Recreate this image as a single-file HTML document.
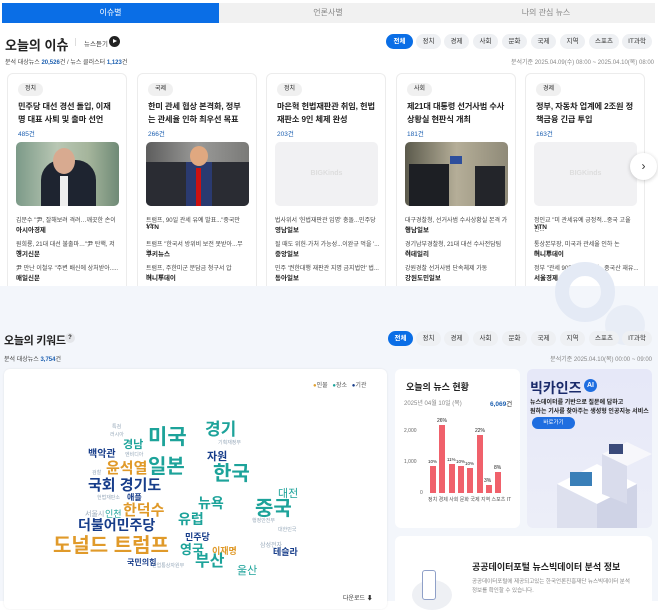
<!DOCTYPE html>
<html><head><meta charset="utf-8"><style>
*{margin:0;padding:0;box-sizing:border-box}
body{width:658px;height:601px;overflow:hidden;background:#fff;font-family:"Liberation Sans","Noto Sans CJK KR",sans-serif;color:#222;position:relative}
.a{position:absolute;white-space:nowrap}
.tab{position:absolute;top:3px;height:20px;font-size:8px;line-height:20px;text-align:center;color:#888;background:#f1f1f1}
.pill{position:absolute;height:15px;line-height:15px;font-size:6.5px;text-align:center;border-radius:8px;background:#eef0f3;color:#333}
.pill.on{background:#0a6ee6;color:#fff;font-weight:bold}
.card{position:absolute;top:73px;width:120px;height:230px;background:#fff;border:1px solid #ececec;border-radius:6px}
.tag{position:absolute;left:10px;top:9px;height:13px;line-height:13px;padding:0 7px;font-size:6px;background:#f0f0f0;border-radius:7px}
.tt{position:absolute;left:10px;top:26px;width:99px;font-size:8.2px;line-height:13px;font-weight:bold;white-space:normal;letter-spacing:-.1px}
.cnt{position:absolute;left:10px;top:54px;font-size:6.5px;color:#1c5fb0}
.img{position:absolute;left:8px;top:68px;width:103px;height:64px;border-radius:5px;overflow:hidden}
.ph{background:#f1f1f3;color:#ddd;font-size:7px;font-weight:bold;text-align:center;line-height:64px}
.li{position:absolute;left:8px;font-size:6px;color:#444;width:106px;overflow:hidden}
.src{position:absolute;left:8px;font-size:6.5px;font-weight:bold;color:#222}
.w{position:absolute;white-space:nowrap;font-weight:bold;line-height:1}
.t{color:#1da39a}.n{color:#173d8a}.o{color:#e09a2a}.g{color:#9ab;font-weight:normal}
</style></head><body>
<div class="tab" style="left:2px;width:217px;background:#0a6ee6;color:#fff">이슈별</div>
<div class="tab" style="left:219px;width:218px">언론사별</div>
<div class="tab" style="left:437px;width:218px">나의 관심 뉴스</div>

<div class="a" style="left:5px;top:35px;font-size:13px;font-weight:bold">오늘의 이슈</div>
<div class="a" style="left:60px;top:38px;font-size:7px;font-weight:bold">?</div>
<div class="a" style="left:75px;top:38px;width:1px;height:8px;background:#ddd"></div>
<div class="a" style="left:84px;top:38px;font-size:6.5px;color:#444">뉴스듣기</div>
<div class="a" style="left:109px;top:36px;width:11px;height:11px;border-radius:50%;background:#222"></div>
<div class="a" style="left:113px;top:39px;border-left:4px solid #fff;border-top:2.5px solid transparent;border-bottom:2.5px solid transparent"></div>

<div class="pill on" style="left:386px;top:34px;width:27px">전체</div>
<div class="pill" style="left:416px;top:34px;width:25px">정치</div>
<div class="pill" style="left:444px;top:34px;width:25px">경제</div>
<div class="pill" style="left:473px;top:34px;width:25px">사회</div>
<div class="pill" style="left:502px;top:34px;width:25px">문화</div>
<div class="pill" style="left:531px;top:34px;width:25px">국제</div>
<div class="pill" style="left:560px;top:34px;width:25px">지역</div>
<div class="pill" style="left:589px;top:34px;width:30px">스포츠</div>
<div class="pill" style="left:622px;top:34px;width:30px">IT과학</div>

<div class="a" style="left:5px;top:57px;font-size:6px;color:#444">분석 대상뉴스 <b style="color:#1c5fb0">20,526</b>건 / 뉴스 클러스터 <b style="color:#1c5fb0">1,123</b>건</div>
<div class="a" style="right:4px;top:57px;font-size:6px;color:#888">분석기준 2025.04.09(수) 08:00 ~ 2025.04.10(목) 08:00</div>

<div class="card" style="left:7px"><div class="tag">정치</div><div class="tt">민주당 대선 경선 돌입, 이재명 대표 사퇴 및 출마 선언</div><div class="cnt">485건</div>
<div class="img" style="background:linear-gradient(90deg,#7c9a88,#b9c7b4 40%,#a5b59c 70%,#6f8a76)"><div style="position:absolute;left:25px;top:18px;width:55px;height:50px;border-radius:20px 20px 0 0;background:#1e2430"></div><div style="position:absolute;left:37px;top:6px;width:22px;height:26px;border-radius:50%;background:#d8aa90"></div><div style="position:absolute;left:44px;top:34px;width:8px;height:30px;background:#eee"></div></div>
<div class="li" style="top:141px">김문수 "尹, 잘해보려 격려…깨끗한 손이 ...</div><div class="src" style="top:150px">아시아경제</div>
<div class="li" style="top:165px">원희룡, 21대 대선 불출마…"尹 탄핵, 저에...</div><div class="src" style="top:174px">경기신문</div>
<div class="li" style="top:189px">尹 만난 이철우 "주변 배신에 상처받아.....</div><div class="src" style="top:198px">매일신문</div>
<div class="li" style="top:213px">권력의 대선 출마 선언 ...</div></div>

<div class="card" style="left:137px"><div class="tag">국제</div><div class="tt">한미 관세 협상 본격화, 정부는 관세율 인하 최우선 목표</div><div class="cnt">266건</div>
<div class="img" style="background:linear-gradient(90deg,#5d5d5d,#9a9a98 50%,#7a7a78)"><div style="position:absolute;left:0;top:20px;width:103px;height:44px;background:#2a2c33"></div><div style="position:absolute;left:40px;top:20px;width:26px;height:44px;background:#2a3a70"></div><div style="position:absolute;left:50px;top:26px;width:5px;height:38px;background:#c11"></div><div style="position:absolute;left:44px;top:4px;width:18px;height:20px;border-radius:50%;background:#e0a880"></div></div>
<div class="li" style="top:141px">트럼프, 90일 관세 유예 발표..."중국만 12...</div><div class="src" style="top:150px">YTN</div>
<div class="li" style="top:165px">트럼프 "한국서 방위비 보전 못받아...무역...</div><div class="src" style="top:174px">쿠키뉴스</div>
<div class="li" style="top:189px">트럼프, 주한미군 분담금 청구서 압박..."무...</div><div class="src" style="top:198px">머니투데이</div></div>

<div class="card" style="left:266px"><div class="tag">정치</div><div class="tt">마은혁 헌법재판관 취임, 헌법재판소 9인 체제 완성</div><div class="cnt">203건</div>
<div class="img ph">BIGKinds</div>
<div class="li" style="top:141px">법사위서 '헌법재판관 임명' 충돌...민주당 ...</div><div class="src" style="top:150px">영남일보</div>
<div class="li" style="top:165px">될 때도 위헌·가처 가능성...이완규 먹을 '...</div><div class="src" style="top:174px">중앙일보</div>
<div class="li" style="top:189px">민주 '권한대행 재판관 지명 금지법안' 법...</div><div class="src" style="top:198px">동아일보</div></div>

<div class="card" style="left:396px"><div class="tag">사회</div><div class="tt">제21대 대통령 선거사범 수사상황실 현판식 개최</div><div class="cnt">181건</div>
<div class="img" style="background:linear-gradient(90deg,#5b5a4c,#b5ae98 50%,#8f8a78)"><div style="position:absolute;left:4px;top:22px;width:40px;height:42px;background:#1d1f24"></div><div style="position:absolute;left:70px;top:24px;width:30px;height:40px;background:#23252a"></div><div style="position:absolute;left:45px;top:14px;width:12px;height:8px;background:#2d4e9c"></div></div>
<div class="li" style="top:141px">대구경찰청, 선거사범 수사상황실 본격 가동</div><div class="src" style="top:150px">영남일보</div>
<div class="li" style="top:165px">경기남부경찰청, 21대 대선 수사전담팀 가...</div><div class="src" style="top:174px">이데일리</div>
<div class="li" style="top:189px">강원경찰 선거사범 단속체제 가동</div><div class="src" style="top:198px">강원도민일보</div></div>

<div class="card" style="left:525px"><div class="tag">경제</div><div class="tt">정부, 자동차 업계에 2조원 정책금융 긴급 투입</div><div class="cnt">163건</div>
<div class="img ph">BIGKinds</div>
<div class="li" style="top:141px">정인교 "미 관세유예 긍정적...중국 고율관...</div><div class="src" style="top:150px">YTN</div>
<div class="li" style="top:165px">통상본부장, 미국과 관세율 인하 논의..."동...</div><div class="src" style="top:174px">머니투데이</div>
<div class="li" style="top:189px">정부 "관세 90일 유예 긍정...중국산 재유...</div><div class="src" style="top:198px">서울경제</div></div>

<div class="a" style="left:630px;top:153px;width:27px;height:27px;border-radius:50%;background:#fff;box-shadow:0 1px 4px rgba(0,0,0,.2);font-size:12px;line-height:27px;text-align:center;color:#333">›</div>

<div class="a" style="left:0;top:286px;width:658px;height:315px;background:#f3f6fb"></div>
<div class="a" style="left:555px;top:262px;width:60px;height:60px;border-radius:50%;border:14px solid #e4eaf5"></div>
<div class="a" style="left:605px;top:305px;width:40px;height:40px;border-radius:50%;background:#e8edf6"></div>

<div class="a" style="left:4px;top:332px;font-size:11px;font-weight:bold;letter-spacing:-.3px">오늘의 키워드</div>
<div class="a" style="left:65px;top:333px;width:10px;height:10px;border-radius:50%;background:#e4e6ea;font-size:6px;line-height:10px;text-align:center;font-weight:bold">?</div>
<div class="pill on" style="left:388px;top:331px;width:25px">전체</div>
<div class="pill" style="left:416px;top:331px;width:25px">정치</div>
<div class="pill" style="left:444px;top:331px;width:25px">경제</div>
<div class="pill" style="left:473px;top:331px;width:25px">사회</div>
<div class="pill" style="left:502px;top:331px;width:25px">문화</div>
<div class="pill" style="left:531px;top:331px;width:25px">국제</div>
<div class="pill" style="left:560px;top:331px;width:25px">지역</div>
<div class="pill" style="left:589px;top:331px;width:30px">스포츠</div>
<div class="pill" style="left:622px;top:331px;width:30px">IT과학</div>
<div class="a" style="left:4px;top:354px;font-size:6px;color:#444">분석 대상뉴스 <b style="color:#1c5fb0">3,754</b>건</div>
<div class="a" style="right:6px;top:354px;font-size:6px;color:#888">분석기준 2025.04.10(목) 00:00 ~ 09:00</div>

<div class="a" style="left:4px;top:369px;width:383px;height:240px;background:#fff;border-radius:6px;box-shadow:0 0 2px rgba(0,0,0,.08)"></div>
<div class="a" style="left:313px;top:380px;font-size:6px;color:#555;word-spacing:3px"><span style="color:#e0a030">●</span>인물 <span style="color:#1da39a">●</span>장소 <span style="color:#173d8a">●</span>기관</div>

<div class="w t" style="left:148px;top:427px;font-size:21px">미국</div>
<div class="w t" style="left:205px;top:421px;font-size:17px">경기</div>
<div class="w t" style="left:123px;top:440px;font-size:11px">경남</div>
<div class="w n" style="left:88px;top:450px;font-size:10px">백악관</div>
<div class="w o" style="left:106px;top:461px;font-size:15px">윤석열</div>
<div class="w t" style="left:148px;top:457px;font-size:20px">일본</div>
<div class="w n" style="left:207px;top:452px;font-size:11px">자원</div>
<div class="w t" style="left:213px;top:464px;font-size:20px">한국</div>
<div class="w n" style="left:88px;top:478px;font-size:15px">국회 경기도</div>
<div class="w t" style="left:198px;top:496px;font-size:14px">뉴욕</div>
<div class="w t" style="left:278px;top:489px;font-size:11px;font-weight:normal">대전</div>
<div class="w t" style="left:255px;top:499px;font-size:20px">중국</div>
<div class="w n" style="left:127px;top:494px;font-size:8px">애플</div>
<div class="w o" style="left:123px;top:503px;font-size:15px">한덕수</div>
<div class="w g" style="left:85px;top:511px;font-size:7px">서울시</div>
<div class="w t" style="left:105px;top:510px;font-size:9px;font-weight:normal">인천</div>
<div class="w t" style="left:178px;top:512px;font-size:14px">유럽</div>
<div class="w n" style="left:78px;top:518px;font-size:14px">더불어민주당</div>
<div class="w o" style="left:53px;top:536px;font-size:20px">도널드 트럼프</div>
<div class="w n" style="left:185px;top:533px;font-size:9px">민주당</div>
<div class="w t" style="left:180px;top:543px;font-size:13px">영국</div>
<div class="w o" style="left:212px;top:547px;font-size:9px">이재명</div>
<div class="w t" style="left:195px;top:554px;font-size:16px">부산</div>
<div class="w n" style="left:273px;top:548px;font-size:9px">테슬라</div>
<div class="w g" style="left:260px;top:543px;font-size:6px">삼성전자</div>
<div class="w n" style="left:127px;top:559px;font-size:8px">국민의힘</div>
<div class="w t" style="left:237px;top:566px;font-size:11px;font-weight:normal">울산</div>
<div class="w g" style="left:112px;top:425px;font-size:5px">특검</div>
<div class="w g" style="left:110px;top:433px;font-size:5px">러시아</div>
<div class="w g" style="left:125px;top:453px;font-size:5px">엔비디아</div>
<div class="w g" style="left:92px;top:471px;font-size:5px">검찰</div>
<div class="w g" style="left:97px;top:496px;font-size:5px">헌법재판소</div>
<div class="w g" style="left:278px;top:528px;font-size:5px">대한민국</div>
<div class="w g" style="left:252px;top:519px;font-size:5px">행정안전부</div>
<div class="w g" style="left:152px;top:564px;font-size:5px">산업통상자원부</div>
<div class="w g" style="left:218px;top:441px;font-size:5px">기획재정부</div>
<div class="a" style="left:343px;top:593px;font-size:6px;color:#333">다운로드 ⬇</div>

<div class="a" style="left:395px;top:369px;width:125px;height:159px;background:#fff;border-radius:6px"></div>
<div class="a" style="left:406px;top:380px;font-size:9px;font-weight:bold">오늘의 뉴스 현황</div>
<div class="a" style="left:404px;top:398px;font-size:6px;color:#888">2025년 04월 10일 (목)</div>
<div class="a" style="left:490px;top:398px;font-size:6.5px;font-weight:bold;color:#1c5fb0">6,069<span style="font-weight:normal;color:#333">건</span></div>
<div class="a" style="left:404px;top:428px;font-size:5px;color:#666">2,000</div>
<div class="a" style="left:404px;top:459px;font-size:5px;color:#666">1,000</div>
<div class="a" style="left:420px;top:490px;font-size:5px;color:#666">0</div>
<div class="a" style="left:430px;top:466px;width:6px;height:27px;background:#f0616b"></div>
<div class="a" style="left:439px;top:425px;width:6px;height:68px;background:#f0616b"></div>
<div class="a" style="left:449px;top:464px;width:6px;height:29px;background:#f0616b"></div>
<div class="a" style="left:458px;top:466px;width:6px;height:27px;background:#f0616b"></div>
<div class="a" style="left:467px;top:468px;width:6px;height:25px;background:#f0616b"></div>
<div class="a" style="left:477px;top:435px;width:6px;height:58px;background:#f0616b"></div>
<div class="a" style="left:486px;top:485px;width:6px;height:8px;background:#f0616b"></div>
<div class="a" style="left:495px;top:472px;width:6px;height:21px;background:#f0616b"></div>
<div class="a" style="left:428px;top:459px;font-size:4.5px">10%</div>
<div class="a" style="left:447px;top:457px;font-size:4.5px">11%</div>
<div class="a" style="left:456px;top:459px;font-size:4.5px">10%</div>
<div class="a" style="left:465px;top:461px;font-size:4.5px">10%</div>
<div class="a" style="left:437px;top:418px;font-size:5px">26%</div>
<div class="a" style="left:475px;top:428px;font-size:5px">22%</div>
<div class="a" style="left:484px;top:478px;font-size:5px">3%</div>
<div class="a" style="left:494px;top:465px;font-size:5px">8%</div>
<div class="a" style="left:428px;top:496px;font-size:5px;color:#555">정치 경제 사회 문화 국제 지역 스포츠 IT</div>

<div class="a" style="left:527px;top:369px;width:125px;height:159px;background:linear-gradient(#e6e8f8,#eceef8);border-radius:6px;overflow:hidden">
<div class="a" style="left:3px;top:9px;font-size:14px;font-weight:bold;color:#1a2a6a">빅카인즈</div>
<div class="a" style="left:57px;top:10px;width:13px;height:13px;border-radius:50%;background:#1f6ee0;color:#fff;font-size:7px;font-weight:bold;text-align:center;line-height:13px">AI</div>
<div class="a" style="left:3px;top:28px;font-size:6px;font-weight:bold;color:#222">뉴스데이터를 기반으로 질문에 답하고</div>
<div class="a" style="left:3px;top:37px;font-size:6px;font-weight:bold;color:#222">원하는 기사를 찾아주는 생성형 인공지능 서비스</div>
<div class="a" style="left:5px;top:48px;width:43px;height:12px;border-radius:6px;background:#1f6ee0;color:#fff;font-size:5.5px;text-align:center;line-height:12px">바로가기</div>
<svg class="a" style="left:0;top:55px" width="125" height="104"><polygon points="30,60 70,40 110,60 70,80" fill="#fff"/><polygon points="30,60 70,80 70,104 30,104" fill="#dde0ee"/><polygon points="70,80 110,60 110,104 70,104" fill="#cfd3e6"/><polygon points="75,30 100,18 125,30 100,42" fill="#f7f7fb"/><polygon points="75,30 100,42 100,80 75,70" fill="#d9dcec"/><rect x="43" y="48" width="22" height="14" fill="#3a7fb8"/><rect x="82" y="20" width="14" height="10" fill="#3a4a7a"/></svg>
</div>

<div class="a" style="left:395px;top:536px;width:257px;height:70px;background:#fff;border-radius:6px"></div>
<div class="a" style="left:412px;top:580px;width:40px;height:30px;border-radius:50%;background:#eef0f4"></div>
<div class="a" style="left:422px;top:570px;width:14px;height:30px;border-radius:3px;background:#fff;border:1px solid #8fa0c8"></div>
<div class="a" style="left:472px;top:560px;font-size:9px;font-weight:bold">공공데이터포털 뉴스빅데이터 분석 정보</div>
<div class="a" style="left:472px;top:577px;font-size:5.5px;color:#888">공공데이터포털에 제공되고있는 한국언론진흥재단 뉴스빅데이터 분석</div>
<div class="a" style="left:472px;top:586px;font-size:5.5px;color:#888">정보를 확인할 수 있습니다.</div>
</body></html>
